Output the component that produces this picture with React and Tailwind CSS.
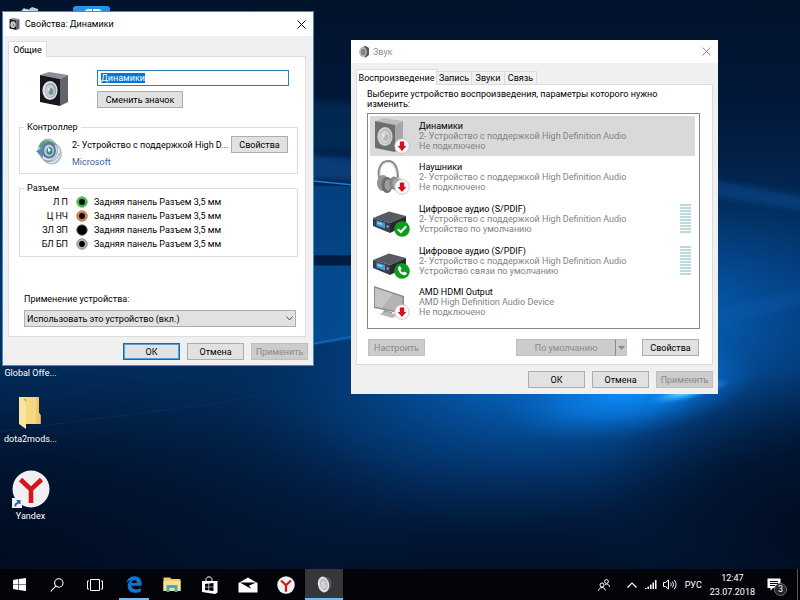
import React, { useEffect, useRef, useState } from 'react';
import { clsx } from 'clsx';

const devices = [
  { id: 1, name: 'Динамики', driver: '2- Устройство с поддержкой High Definition Audio', status: 'Не подключено', icon: 'speaker', badge: 'off' },
  { id: 2, name: 'Наушники', driver: '2- Устройство с поддержкой High Definition Audio', status: 'Не подключено', icon: 'headphones', badge: 'off' },
  { id: 3, name: 'Цифровое аудио (S/PDIF)', driver: '2- Устройство с поддержкой High Definition Audio', status: 'Устройство по умолчанию', icon: 'receiver', badge: 'check', meter: true },
  { id: 4, name: 'Цифровое аудио (S/PDIF)', driver: '2- Устройство с поддержкой High Definition Audio', status: 'Устройство связи по умолчанию', icon: 'receiver', badge: 'phone', meter: true },
  { id: 5, name: 'AMD HDMI Output', driver: 'AMD High Definition Audio Device', status: 'Не подключено', icon: 'monitor', badge: 'off' },
];

const jacks = [
  { label: 'Л П', ring: '#3cc043', edge: '#7a9a7c' },
  { label: 'Ц НЧ', ring: '#d98040', edge: '#a98468' },
  { label: 'ЗЛ ЗП', ring: '#000000', edge: '#777777' },
  { label: 'БЛ БП', ring: '#b0b0b0', edge: '#8c8c8c' },
];

function Wallpaper() {
  return (
    <svg className="absolute inset-0 w-full h-full" viewBox="0 0 800 570" preserveAspectRatio="none" aria-hidden="true">
      <defs>
        <linearGradient id="base" x1="0" y1="0" x2="0" y2="1">
          <stop offset="0" stopColor="#01122b" />
          <stop offset="0.2" stopColor="#02193b" />
          <stop offset="0.5" stopColor="#03356a" />
          <stop offset="0.7" stopColor="#022a56" />
          <stop offset="0.88" stopColor="#021c3f" />
          <stop offset="1" stopColor="#011128" />
        </linearGradient>
        <radialGradient id="glow" gradientUnits="userSpaceOnUse" cx="0" cy="0" r="1" gradientTransform="translate(590 350) rotate(-10) scale(400 180)">
          <stop offset="0" stopColor="#0a78de" />
          <stop offset="0.3" stopColor="#0660b8" stopOpacity="0.9" />
          <stop offset="0.65" stopColor="#04458c" stopOpacity="0.5" />
          <stop offset="1" stopColor="#022550" stopOpacity="0" />
        </radialGradient>
        <radialGradient id="beam" gradientUnits="userSpaceOnUse" cx="0" cy="0" r="1" gradientTransform="translate(630 392) rotate(-10) scale(130 46)">
          <stop offset="0" stopColor="#0a90fa" />
          <stop offset="0.5" stopColor="#087be4" stopOpacity="0.7" />
          <stop offset="1" stopColor="#0660b8" stopOpacity="0" />
        </radialGradient>
        <radialGradient id="flare" gradientUnits="userSpaceOnUse" cx="0" cy="0" r="1" gradientTransform="translate(688 392) rotate(-14) scale(44 9)">
          <stop offset="0" stopColor="#9be6ff" />
          <stop offset="0.5" stopColor="#35b4ff" stopOpacity="0.7" />
          <stop offset="1" stopColor="#0a84ee" stopOpacity="0" />
        </radialGradient>
        <radialGradient id="corner" gradientUnits="userSpaceOnUse" cx="0" cy="0" r="1" gradientTransform="translate(0 560) scale(440 200)">
          <stop offset="0" stopColor="#010c20" />
          <stop offset="0.5" stopColor="#01122c" stopOpacity="0.8" />
          <stop offset="1" stopColor="#021c40" stopOpacity="0" />
        </radialGradient>
        <radialGradient id="cornerRight" gradientUnits="userSpaceOnUse" cx="0" cy="0" r="1" gradientTransform="translate(820 530) scale(240 160)">
          <stop offset="0" stopColor="#010c20" />
          <stop offset="0.5" stopColor="#01122c" stopOpacity="0.8" />
          <stop offset="1" stopColor="#021c40" stopOpacity="0" />
        </radialGradient>
        <filter id="soft" x="-50%" y="-50%" width="200%" height="200%">
          <feGaussianBlur stdDeviation="3" />
        </filter>
      </defs>
      <rect width="800" height="570" fill="url(#base)" />
      <rect width="800" height="570" fill="url(#glow)" />
      <rect width="800" height="570" fill="url(#corner)" />
      <rect width="800" height="570" fill="url(#cornerRight)" />
      <rect width="800" height="570" fill="url(#beam)" />
      <rect width="800" height="570" fill="url(#flare)" />
      <path d="M290 100L370 105V152L290 148Z" fill="#03305f" opacity="0.6" filter="url(#soft)" />
      <path d="M290 154L370 160V182L290 178Z" fill="#07488e" opacity="0.7" filter="url(#soft)" />
      <path d="M310 181L352 185" stroke="#1c7fd8" strokeWidth="1.5" />
      <path d="M310 186H352V256H310Z" fill="#0456a4" opacity="0.55" />
      <path d="M310 256H352V266H310Z" fill="#011c40" />
      <path d="M310 266H352V340L310 346Z" fill="#0460b4" opacity="0.5" />
      <path d="M314 344L352 337" stroke="#1668b4" strokeWidth="1.5" />
      <path d="M0 432L210 405L352 378" stroke="#06386f" strokeWidth="1" fill="none" opacity="0.5" />
      <path d="M700 178L820 200V214L700 194Z" fill="#0a4f98" opacity="0.5" filter="url(#soft)" />
      <path d="M700 312L820 286V300L700 332Z" fill="#0a59a8" opacity="0.4" filter="url(#soft)" />
    </svg>
  );
}

function SpeakerIcon({ className, faded }) {
  return (
    <svg className={className} viewBox="0 0 30 34" aria-hidden="true">
      <path d="M1 3L10 0L29 3L21 7Z" fill={faded ? '#bdbdbd' : '#8d8f98'} />
      <path d="M1 3L21 7V34L1 30Z" fill={faded ? '#6e6e6e' : '#16171b'} />
      <path d="M21 7L29 3V30L21 34Z" fill={faded ? '#a6a6a6' : '#62646d'} />
      <ellipse cx="11" cy="18.500" rx="7.600" ry="9.600" fill={faded ? '#d2d2d2' : '#dfe3e6'} />
      <ellipse cx="11.500" cy="18.500" rx="5.800" ry="7.600" fill={faded ? '#b2b2b2' : '#98a2aa'} />
      <ellipse cx="11" cy="19" rx="4.800" ry="6.400" fill={faded ? '#d2d2d2' : '#c3ccd2'} />
      <ellipse cx="12" cy="19.500" rx="2.400" ry="3.200" fill={faded ? '#b6b6b6' : '#7d8d99'} />
      <path d="M8 15L11 17L10 20Z" fill="#f1f5f7" opacity="0.8" />
    </svg>
  );
}

function HeadphonesIcon({ className }) {
  return (
    <svg className={className} viewBox="0 0 36 36" aria-hidden="true">
      <path d="M7 22C3 11 8 2 15 2C22 2 25 9 25 20" fill="none" stroke="#8b8b8b" strokeWidth="2" />
      <path d="M8 20C5.500 11 9 3.500 15 3.500C20 3.500 23.500 10 23.500 18" fill="none" stroke="#c9c9c9" strokeWidth="0.800" />
      <ellipse cx="10" cy="24" rx="6" ry="8" fill="#939393" />
      <ellipse cx="14" cy="26" rx="5.500" ry="8" fill="#6c6c6c" />
      <ellipse cx="15" cy="26" rx="3.500" ry="5.800" fill="#9d9d9d" />
      <ellipse cx="24" cy="25" rx="6" ry="7" fill="#c4c1b8" />
      <ellipse cx="21" cy="24" rx="4.500" ry="6.500" fill="#858585" />
      <ellipse cx="22" cy="24" rx="2.500" ry="4.500" fill="#a6a6a6" />
    </svg>
  );
}

function ReceiverIcon({ className }) {
  return (
    <svg className={className} viewBox="0 0 36 36" aria-hidden="true">
      <path d="M0 17L16 10.500L33 15L17 22Z" fill="#585b64" />
      <path d="M0 17L17 22V32L0 25Z" fill="#3b3f49" />
      <path d="M17 22L33 15V24L17 32Z" fill="#282a32" />
      <path d="M3.500 19.500L12 22V27.500L3.500 24.500Z" fill="#3f9fd6" />
      <path d="M4.500 21L9 22.300V24L4.500 22.700Z" fill="#8fd4f4" />
      <circle cx="14.700" cy="25.500" r="1.200" fill="#9aa0aa" />
    </svg>
  );
}

function MonitorIcon({ className }) {
  return (
    <svg className={className} viewBox="0 0 36 36" aria-hidden="true">
      <path d="M11 26L19 28V32L9 30Z" fill="#9b9b9b" />
      <path d="M6 30L13 28L26 31L19 34Z" fill="#b8b8b8" />
      <path d="M1 2L31 12V30L1 24Z" fill="#8b8b8b" />
      <path d="M2 4L29.500 13V28.500L2 22.500Z" fill="#b4b4b4" />
      <path d="M2 4L20 10L9 24L2 22.500Z" fill="#c5c5c5" />
    </svg>
  );
}

function Badge({ kind }) {
  if (kind === 'off') {
    return (
      <svg className="absolute -right-px bottom-0 w-4 h-4" viewBox="0 0 16 16" aria-hidden="true">
        <circle cx="8" cy="8" r="7.300" fill="#fbfbfb" stroke="#bdbdbd" strokeWidth="0.800" />
        <path d="M5.800 3.500H10.200V8H12.300L8 13L3.700 8H5.800Z" fill="#d4111b" />
      </svg>
    );
  }
  return (
    <svg className="absolute -right-px bottom-0 w-4 h-4" viewBox="0 0 16 16" aria-hidden="true">
      <circle cx="8" cy="8" r="7.800" fill="#0f9b1c" />
      {kind === 'check' ? (
        <path d="M3.800 8.200L6.800 11L12.200 5.300" fill="none" stroke="#ffffff" strokeWidth="2" />
      ) : (
        <path d="M4.200 4.200L5.800 3L7.600 5.600L6.500 6.900C7 8.200 7.900 9.100 9.200 9.600L10.500 8.500L13 10.300L11.800 12.100C8 13 3.400 8.200 4.200 4.200Z" fill="#ffffff" />
      )}
    </svg>
  );
}

function DeviceIcon({ device }) {
  return (
    <div className="relative w-9 h-9 shrink-0">
      {device.icon === 'speaker' && <SpeakerIcon faded className="w-[30px] h-[34px] ml-px" />}
      {device.icon === 'headphones' && <HeadphonesIcon className="w-9 h-9" />}
      {device.icon === 'receiver' && <ReceiverIcon className="w-9 h-9" />}
      {device.icon === 'monitor' && <MonitorIcon className="w-9 h-9" />}
      <Badge kind={device.badge} />
    </div>
  );
}

function ControllerIcon() {
  return (
    <svg className="w-[27px] h-[27px] shrink-0" viewBox="0 0 27 27" aria-hidden="true">
      <ellipse cx="15.500" cy="15.500" rx="10.500" ry="11" fill="#b6c1cc" />
      <ellipse cx="15" cy="15" rx="9" ry="10" fill="#e8edf1" />
      <ellipse cx="12" cy="12" rx="9.500" ry="11" fill="#d5dee6" stroke="#8599ab" strokeWidth="0.800" />
      <path d="M3 9C5 1 15 0 20 7L16 10C12 6 8 7 6 12Z" fill="#5a9f84" />
      <ellipse cx="13" cy="12.500" rx="7" ry="8" fill="#5f7795" />
      <ellipse cx="13" cy="12.500" rx="5" ry="6" fill="#b3cdd9" />
      <ellipse cx="13.500" cy="13" rx="3" ry="3.800" fill="#3f8583" />
      <path d="M0 13L7 10V20Z" fill="#5e83b0" />
      <path d="M11.500 9L15 12L12.500 14.500Z" fill="#f2fbff" />
      <path d="M8 22C13 25.500 21 23 23.500 15" fill="none" stroke="#8fa0b4" strokeWidth="1" />
    </svg>
  );
}

function CloseIcon() {
  return (
    <svg className="w-[9px] h-[9px]" viewBox="0 0 9 9" aria-hidden="true">
      <path d="M0.500 0.500L8.500 8.500M8.500 0.500L0.500 8.500" stroke="currentColor" strokeWidth="1" />
    </svg>
  );
}

function DialogButton({ children, primary, disabled, className = 'w-[57px]' }) {
  return (
    <button
      type="button"
      disabled={disabled}
      className={clsx(
        'h-[17px] shrink-0 flex items-center justify-center border whitespace-nowrap',
        disabled && 'border-[#bfbfbf] bg-[#cccccc] text-[#8a8a8a]',
        primary && 'border-[#0f6cb5] bg-[#e1e1e1] outline outline-1 -outline-offset-2 outline-[#5b9fd6]',
        !disabled && !primary && 'border-[#adadad] bg-[#e1e1e1]',
        className
      )}
    >
      {children}
    </button>
  );
}

function PropertiesWindow() {
  const nameRef = useRef(null);
  const [name, setName] = useState('Динамики');
  const [usage, setUsage] = useState('on');

  useEffect(() => {
    nameRef.current.focus();
    nameRef.current.select();
  }, []);

  return (
    <section className="absolute left-[2px] top-[11px] w-[312px] border border-[#3a8fd0] bg-[#f0f0f0]" aria-label="Свойства: Динамики">
      <header className="flex h-6 items-center bg-white pl-[6px] pr-[7px]">
        <SpeakerIcon className="w-[11px] h-3 shrink-0" />
        <h2 className="ml-[5px] flex-1">Свойства: Динамики</h2>
        <button type="button" aria-label="Закрыть">
          <CloseIcon />
        </button>
      </header>

      <div className="px-[5px] pt-[5px]">
        <div role="tablist" className="relative -mb-px flex">
          <button type="button" role="tab" aria-selected="true" className="h-4 w-[39px] border border-b-0 border-[#dcdcdc] bg-white">
            Общие
          </button>
        </div>
        <div role="tabpanel" className="mr-[2px] border border-[#dcdcdc] bg-white pb-[9px] pl-[10px] pr-[7px] pt-[13px]">
          <div className="flex">
            <div className="w-[78px] shrink-0 pl-5">
              <SpeakerIcon className="w-[30px] h-[34px] mt-[2px]" />
            </div>
            <div className="flex flex-1 flex-col items-start gap-[5px] pr-[9px]">
              <input
                ref={nameRef}
                aria-label="Имя устройства"
                value={name}
                onChange={(e) => setName(e.target.value)}
                className="h-4 w-full border border-[#2a80b9] bg-white px-[3px] outline-none selection:bg-[#0078d7] selection:text-white"
              />
              <DialogButton className="w-[86px]">Сменить значок</DialogButton>
            </div>
          </div>

          <fieldset className="mt-[14px] border border-[#dcdcdc] pb-[3px] pl-4 pr-[9px]">
            <legend className="-ml-3 px-[3px] leading-[10px]">Контроллер</legend>
            <div className="flex items-start pt-[4px]">
              <div className="mt-[2px]">
                <ControllerIcon />
              </div>
              <div className="ml-[9px] min-w-0 flex-1 whitespace-nowrap">
                <p className="flex h-[17px] items-center">2- Устройство с поддержкой High D...</p>
                <a href="#microsoft" className="flex h-[17px] items-center text-[#3f5f9f]">Microsoft</a>
              </div>
              <DialogButton>Свойства</DialogButton>
            </div>
          </fieldset>

          <fieldset className="mt-[9px] border border-[#dcdcdc] pb-[5px] pl-4 pt-[2px]">
            <legend className="-ml-3 px-[3px] leading-[10px]">Разъем</legend>
            {jacks.map((jack) => (
              <div key={jack.label} className="flex h-[14px] items-center">
                <span className="w-8 text-right">{jack.label}</span>
                <svg className="ml-2 mr-[6px] w-3 h-3 shrink-0" viewBox="0 0 12 12" aria-hidden="true">
                  <circle cx="6" cy="6" r="5.300" fill={jack.ring} stroke={jack.edge} strokeWidth="0.800" />
                  <circle cx="6" cy="6" r="2.900" fill="#000000" />
                </svg>
                <span>Задняя панель Разъем 3,5 мм</span>
              </div>
            ))}
          </fieldset>

          <div className="mt-9 pl-[5px] pr-[2px]">
            <label htmlFor="usage" className="block">Применение устройства:</label>
            <div className="relative mt-[5px]">
              <select
                id="usage"
                value={usage}
                onChange={(e) => setUsage(e.target.value)}
                className="block h-[17px] w-full appearance-none border border-[#adadad] bg-[#e1e1e1] pl-[2px]"
              >
                <option value="on">Использовать это устройство (вкл.)</option>
                <option value="off">Не использовать это устройство (откл.)</option>
              </select>
              <svg className="pointer-events-none absolute right-[3px] top-[6px] w-[7px] h-[5px]" viewBox="0 0 7 5" aria-hidden="true">
                <path d="M0.500 0.500L3.500 4L6.500 0.500" fill="none" stroke="#555555" strokeWidth="1" />
              </svg>
            </div>
          </div>
        </div>
      </div>

      <footer className="flex justify-end gap-[7px] pb-[5px] pr-[5px] pt-[6px]">
        <DialogButton primary>ОК</DialogButton>
        <DialogButton>Отмена</DialogButton>
        <DialogButton disabled>Применить</DialogButton>
      </footer>
    </section>
  );
}

function LevelMeter() {
  return (
    <svg className="w-[11px] h-[30px] shrink-0" viewBox="0 0 11 30" aria-hidden="true">
      {Array.from({ length: 10 }, (_, i) => (
        <rect key={i} x="0" y={i * 3} width="11" height="2" fill="#b9d9de" />
      ))}
    </svg>
  );
}

function SoundWindow() {
  const [selected, setSelected] = useState(1);

  return (
    <section className="absolute left-[351px] top-[40px] w-[367px] bg-[#f0f0f0]" aria-label="Звук">
      <header className="flex h-[23px] items-center bg-white pl-2 pr-[7px] text-[#8e8e8e]">
        <svg className="w-[10px] h-3 shrink-0" viewBox="0 0 10 12" aria-hidden="true">
          <path d="M3 1L7 0L10 2V9L6 12Z" fill="#55585c" />
          <ellipse cx="4" cy="6" rx="3.800" ry="5" fill="#b4b7ba" />
          <ellipse cx="4.200" cy="6" rx="2.200" ry="3.200" fill="#7d8185" />
        </svg>
        <h2 className="ml-[4px] flex-1">Звук</h2>
        <button type="button" aria-label="Закрыть">
          <CloseIcon />
        </button>
      </header>

      <div className="px-[5px] pt-[6px]">
        <div role="tablist" className="relative -mb-px flex items-end">
          <button type="button" role="tab" aria-selected="true" className="h-4 w-[81px] border border-b-0 border-[#dcdcdc] bg-white">
            Воспроизведение
          </button>
          <button type="button" role="tab" aria-selected="false" className="mb-px h-[13px] w-[35px] border border-b-0 border-l-0 border-[#dcdcdc]">
            Запись
          </button>
          <button type="button" role="tab" aria-selected="false" className="mb-px h-[13px] w-[33px] border border-b-0 border-l-0 border-[#dcdcdc]">
            Звуки
          </button>
          <button type="button" role="tab" aria-selected="false" className="mb-px h-[13px] w-[32px] border border-b-0 border-l-0 border-[#dcdcdc]">
            Связь
          </button>
        </div>
        <div role="tabpanel" className="border border-[#dcdcdc] bg-white pb-2 pl-[10px] pr-3 pt-1">
          <p className="leading-[10px]">
            Выберите устройство воспроизведения, параметры которого нужно
            <br />
            изменить:
          </p>

          <ul role="listbox" aria-label="Устройства воспроизведения" className="mt-1 flex h-[216px] flex-col gap-[2px] border border-[#828790] pb-[6px] pl-[2px] pr-[4px] pt-[2px]">
            {devices.map((device) => (
              <li
                key={device.id}
                role="option"
                aria-selected={selected === device.id}
                onClick={() => setSelected(device.id)}
                className={clsx('flex min-h-0 flex-1 items-center pl-[3px] pr-[4px]', selected === device.id && 'bg-[#d9d9d9]')}
              >
                <DeviceIcon device={device} />
                <div className="ml-[10px] flex-1 leading-[10px]">
                  <p>{device.name}</p>
                  <p className="text-[#838383]">{device.driver}</p>
                  <p className="text-[#838383]">{device.status}</p>
                </div>
                {device.meter && <LevelMeter />}
              </li>
            ))}
          </ul>

          <div className="mt-[10px] flex items-center px-px">
            <DialogButton disabled>Настроить</DialogButton>
            <div className="ml-auto flex">
              <DialogButton disabled className="w-[99px] border-r-0">По умолчанию</DialogButton>
              <button type="button" disabled aria-label="Выбрать" className="flex h-[17px] w-3 items-center justify-center border border-[#bfbfbf] border-l-[#8a8a8a] bg-[#cccccc]">
                <svg className="w-[7px] h-1" viewBox="0 0 7 4" aria-hidden="true">
                  <path d="M0 0H7L3.500 4Z" fill="#8a8a8a" />
                </svg>
              </button>
            </div>
            <DialogButton className="ml-[15px] w-[57px]">Свойства</DialogButton>
          </div>
        </div>
      </div>

      <footer className="flex justify-end gap-[7px] pb-[6px] pr-[5px] pt-[6px]">
        <DialogButton>ОК</DialogButton>
        <DialogButton>Отмена</DialogButton>
        <DialogButton disabled>Применить</DialogButton>
      </footer>
    </section>
  );
}

function YandexIcon({ className }) {
  return (
    <svg className={className} viewBox="0 0 38 38" aria-hidden="true">
      <circle cx="19" cy="19" r="18.500" fill="#f0f0f2" />
      <path d="M8.500 9.500L19 19.500L29.500 9.500M19 18V33" fill="none" stroke="#d3151d" strokeWidth="4.600" />
    </svg>
  );
}

function DesktopIcons() {
  return (
    <div className="absolute left-0 top-[6px] w-[61px] text-white">
      <div className="flex">
        <svg className="ml-5 w-[18px] h-3 shrink-0" viewBox="0 0 18 12" aria-hidden="true">
          <path d="M0 6L4 2L8 4L12 1L18 3V12H0Z" fill="#b9cbd8" />
          <path d="M3 5L8 3L9 12H3Z" fill="#eef3f6" />
        </svg>
        <svg className="ml-[35px] w-[37px] h-3 shrink-0" viewBox="0 0 37 12" aria-hidden="true">
          <path d="M0 12V3Q0 0 3 0H34Q37 0 37 3V12Z" fill="#2493e6" />
          <path d="M12 8Q12 4 16 4H18V8M21 8V4H25Q28 4 28 8" fill="none" stroke="#e6f4ff" strokeWidth="2" />
        </svg>
      </div>
      <a href="#global" className="mt-[349px] block text-center">Global Offe...</a>
      <a href="#dota" className="mt-[17px] block text-center">
        <svg className="mx-auto w-6 h-[34px]" viewBox="0 0 24 34" aria-hidden="true">
          <path d="M0 1H20V17L21.500 19V28H7V4Z" fill="#f5d880" />
          <path d="M17 1H20V17L21.500 19V28H17Z" fill="#eec96a" />
          <path d="M0 1H3L7 5V33L0 28Z" fill="#fbe3a0" />
        </svg>
        <span className="mt-[3px] block">dota2mods...</span>
      </a>
      <a href="#yandex" className="mt-[25px] block text-center">
        <div className="relative mx-auto w-[38px]">
          <YandexIcon className="w-[38px] h-[38px]" />
          <svg className="absolute bottom-0 left-0 w-[10px] h-[10px]" viewBox="0 0 10 10" aria-hidden="true">
            <rect width="10" height="10" fill="#eef3f8" />
            <path d="M2.500 8.500C2 6 3.500 4.500 5.500 4.300L4.300 2H8.500V6.500L7 5.500C5 6 4 7 4.200 8.500Z" fill="#2a62a8" />
          </svg>
        </div>
        <span className="mt-[2px] block">Yandex</span>
      </a>
    </div>
  );
}

function TaskbarItem({ label, open, active, children }) {
  return (
    <button
      type="button"
      aria-label={label}
      className={clsx('relative flex h-full w-[38px] shrink-0 items-center justify-center', active && 'bg-[#35373b]')}
    >
      {children}
      {open && <span className={clsx('absolute bottom-0 h-[2px] bg-[#76b9ed]', active ? 'inset-x-0' : 'inset-x-1')} />}
    </button>
  );
}

function Taskbar() {
  return (
    <nav className="flex h-[31px] shrink-0 items-center bg-[#020409] text-white">
      <div className="flex h-full">
        <TaskbarItem label="Пуск">
          <svg className="w-[13px] h-[13px]" viewBox="0 0 13 13" fill="#ffffff" aria-hidden="true">
            <path d="M0 1.900L5.400 1.100V6.200H0ZM6 1L13 0V6.200H6ZM0 6.800H5.400V11.900L0 11.100ZM6 6.800H13V13L6 12Z" />
          </svg>
        </TaskbarItem>
        <TaskbarItem label="Поиск">
          <svg className="w-[14px] h-[14px]" viewBox="0 0 14 14" fill="none" stroke="#ffffff" strokeWidth="1.100" aria-hidden="true">
            <circle cx="8.800" cy="5" r="4.200" />
            <path d="M5.800 8.200L0.700 13.300" />
          </svg>
        </TaskbarItem>
        <TaskbarItem label="Представление задач">
          <svg className="w-4 h-3" viewBox="0 0 16 12" fill="none" stroke="#ffffff" aria-hidden="true">
            <path d="M3.500 0.500H12.500V11.500H3.500ZM2 2H0.500V10H2M14 2H15.500V10H14" />
          </svg>
        </TaskbarItem>
      </div>
      <div className="ml-px flex h-full">
        <TaskbarItem label="Microsoft Edge" open>
          <svg className="w-4 h-[17px]" viewBox="0 0 16 17" aria-hidden="true">
            <path d="M0.300 7.600C1 3 4.200 0.200 8.300 0.200C13 0.200 15.700 3.500 15.700 8V9.800H5.400C5.600 12.200 7.600 13.200 9.900 13.200C11.800 13.200 13.400 12.700 14.800 11.900V15.400C13.300 16.300 11.400 16.800 9.200 16.800C4.600 16.800 1.700 14 1.700 10C1.700 7.400 3.100 5.200 5.300 4C3.100 4.300 1.300 5.700 0.300 7.600ZM5.500 7H10.900C10.900 5.100 10.100 3.900 8.400 3.900C6.800 3.900 5.700 5.200 5.500 7Z" fill="#0b78d7" />
          </svg>
        </TaskbarItem>
        <TaskbarItem label="Проводник">
          <svg className="w-[18px] h-[15px]" viewBox="0 0 18 15" aria-hidden="true">
            <path d="M0.500 0.500H7L8.500 2H17.500V14H0.500Z" fill="#f0cc6a" />
            <path d="M0.500 4H17.500V14H0.500Z" fill="#fbe08d" />
            <path d="M3.500 8H14.500V15H11.500V11H6.500V15H3.500Z" fill="#3fa9d0" />
          </svg>
        </TaskbarItem>
        <TaskbarItem label="Магазин">
          <svg className="w-4 h-[18px]" viewBox="0 0 16 18" aria-hidden="true">
            <path d="M4 5V3.500C4 0 10 0 10 3.500V5" fill="none" stroke="#ffffff" />
            <path d="M0 5H15.500V16.500L13 18L0 16Z" fill="#ffffff" />
            <path d="M3 8L6.500 7.600V10.700H3ZM7.200 7.500L11.500 7V10.700H7.200ZM3 11.300H6.500V14.400L3 14ZM7.200 11.300H11.500V15L7.200 14.500Z" fill="#020409" />
          </svg>
        </TaskbarItem>
        <TaskbarItem label="Почта">
          <svg className="w-5 h-4" viewBox="0 0 20 16" aria-hidden="true">
            <path d="M0.500 6L10 0.500L19.500 6V15.500H0.500Z" fill="#ffffff" />
            <path d="M2 5.500H18L11 8.800L13.500 12L8 9Z" fill="#020409" />
          </svg>
        </TaskbarItem>
        <TaskbarItem label="Yandex">
          <YandexIcon className="w-[18px] h-[18px]" />
        </TaskbarItem>
        <TaskbarItem label="Звук" open active>
          <svg className="w-[15px] h-[17px]" viewBox="0 0 15 17" aria-hidden="true">
            <ellipse cx="9" cy="8" rx="5.500" ry="7" fill="#55585c" />
            <ellipse cx="6.500" cy="8.500" rx="5.500" ry="8" fill="#e2e4e6" transform="rotate(-12 6.500 8.500)" />
            <ellipse cx="6.800" cy="8.500" rx="3.800" ry="6" fill="#b4b8bb" transform="rotate(-12 6.800 8.500)" />
            <ellipse cx="6.500" cy="8.800" rx="2.400" ry="4" fill="#d0d3d6" transform="rotate(-12 6.500 8.800)" />
          </svg>
        </TaskbarItem>
      </div>

      <div className="ml-auto flex h-full items-center">
        <button type="button" aria-label="Люди">
          <svg className="w-3 h-3" viewBox="0 0 12 12" fill="none" stroke="#ffffff" aria-hidden="true">
            <circle cx="8.500" cy="2.500" r="1.900" />
            <circle cx="4" cy="6" r="2" />
            <path d="M0.600 11.800C0.800 7.500 7 7.500 7.200 11.500M7 5.800C9 4.300 11.300 5.500 11.500 8" />
          </svg>
        </button>
        <button type="button" aria-label="Скрытые значки" className="ml-[17px]">
          <svg className="w-[10px] h-[6px]" viewBox="0 0 10 6" fill="none" stroke="#ffffff" strokeWidth="1.200" aria-hidden="true">
            <path d="M0.500 5.500L5 1L9.500 5.500" />
          </svg>
        </button>
        <button type="button" aria-label="Сеть" className="ml-2">
          <svg className="w-3 h-[9px]" viewBox="0 0 12 9" fill="#ffffff" aria-hidden="true">
            <path d="M0 8H1.500V9H0ZM2.500 6.500H4V9H2.500ZM5 4.500H6.500V9H5ZM7.500 2.500H9V9H7.500ZM10 0H11.500V9H10Z" />
          </svg>
        </button>
        <button type="button" aria-label="Громкость" className="ml-[6px]">
          <svg className="w-[14px] h-[11px]" viewBox="0 0 14 11" fill="none" stroke="#ffffff" aria-hidden="true">
            <path d="M0.500 3.500H2.500L5.500 1V10L2.500 7.500H0.500ZM7.500 3.800C8.300 4.800 8.300 6.200 7.500 7.200M9.300 2.500C10.800 4.300 10.800 6.700 9.300 8.500M11.200 1C13.600 3.600 13.600 7.400 11.200 10" />
          </svg>
        </button>
        <button type="button" className="ml-[8px]">РУС</button>
        <time dateTime="2018-07-23T12:47" className="ml-2 text-center leading-[14px]">
          12:47
          <br />
          23.07.2018
        </time>
        <button type="button" aria-label="Уведомления" className="relative ml-3 mr-[10px] h-5 w-5">
          <svg className="w-[14px] h-[13px]" viewBox="0 0 14 13" aria-hidden="true">
            <path d="M0.500 0.500H13.500V10H6L3.500 12.500V10H0.500Z" fill="#ffffff" />
            <path d="M3 3.500H11M3 5.500H11M3 7.500H8" stroke="#020409" />
          </svg>
          <span className="absolute -bottom-px right-0 flex h-[13px] w-[13px] items-center justify-center rounded-full border border-[#6b6d70] bg-[#232528] leading-none">3</span>
        </button>
        <span className="mr-[2px] h-full w-px bg-[#55585c]" />
      </div>
    </nav>
  );
}

export default function App() {
  return (
    <div className="flex h-screen w-full flex-col overflow-hidden bg-[#01122b] font-['Roboto','Noto_Sans',sans-serif] text-[9px] leading-[12px] text-black">
      <main className="relative min-h-0 flex-1 overflow-hidden">
        <Wallpaper />
        <DesktopIcons />
        <PropertiesWindow />
        <SoundWindow />
      </main>
      <Taskbar />
    </div>
  );
}
